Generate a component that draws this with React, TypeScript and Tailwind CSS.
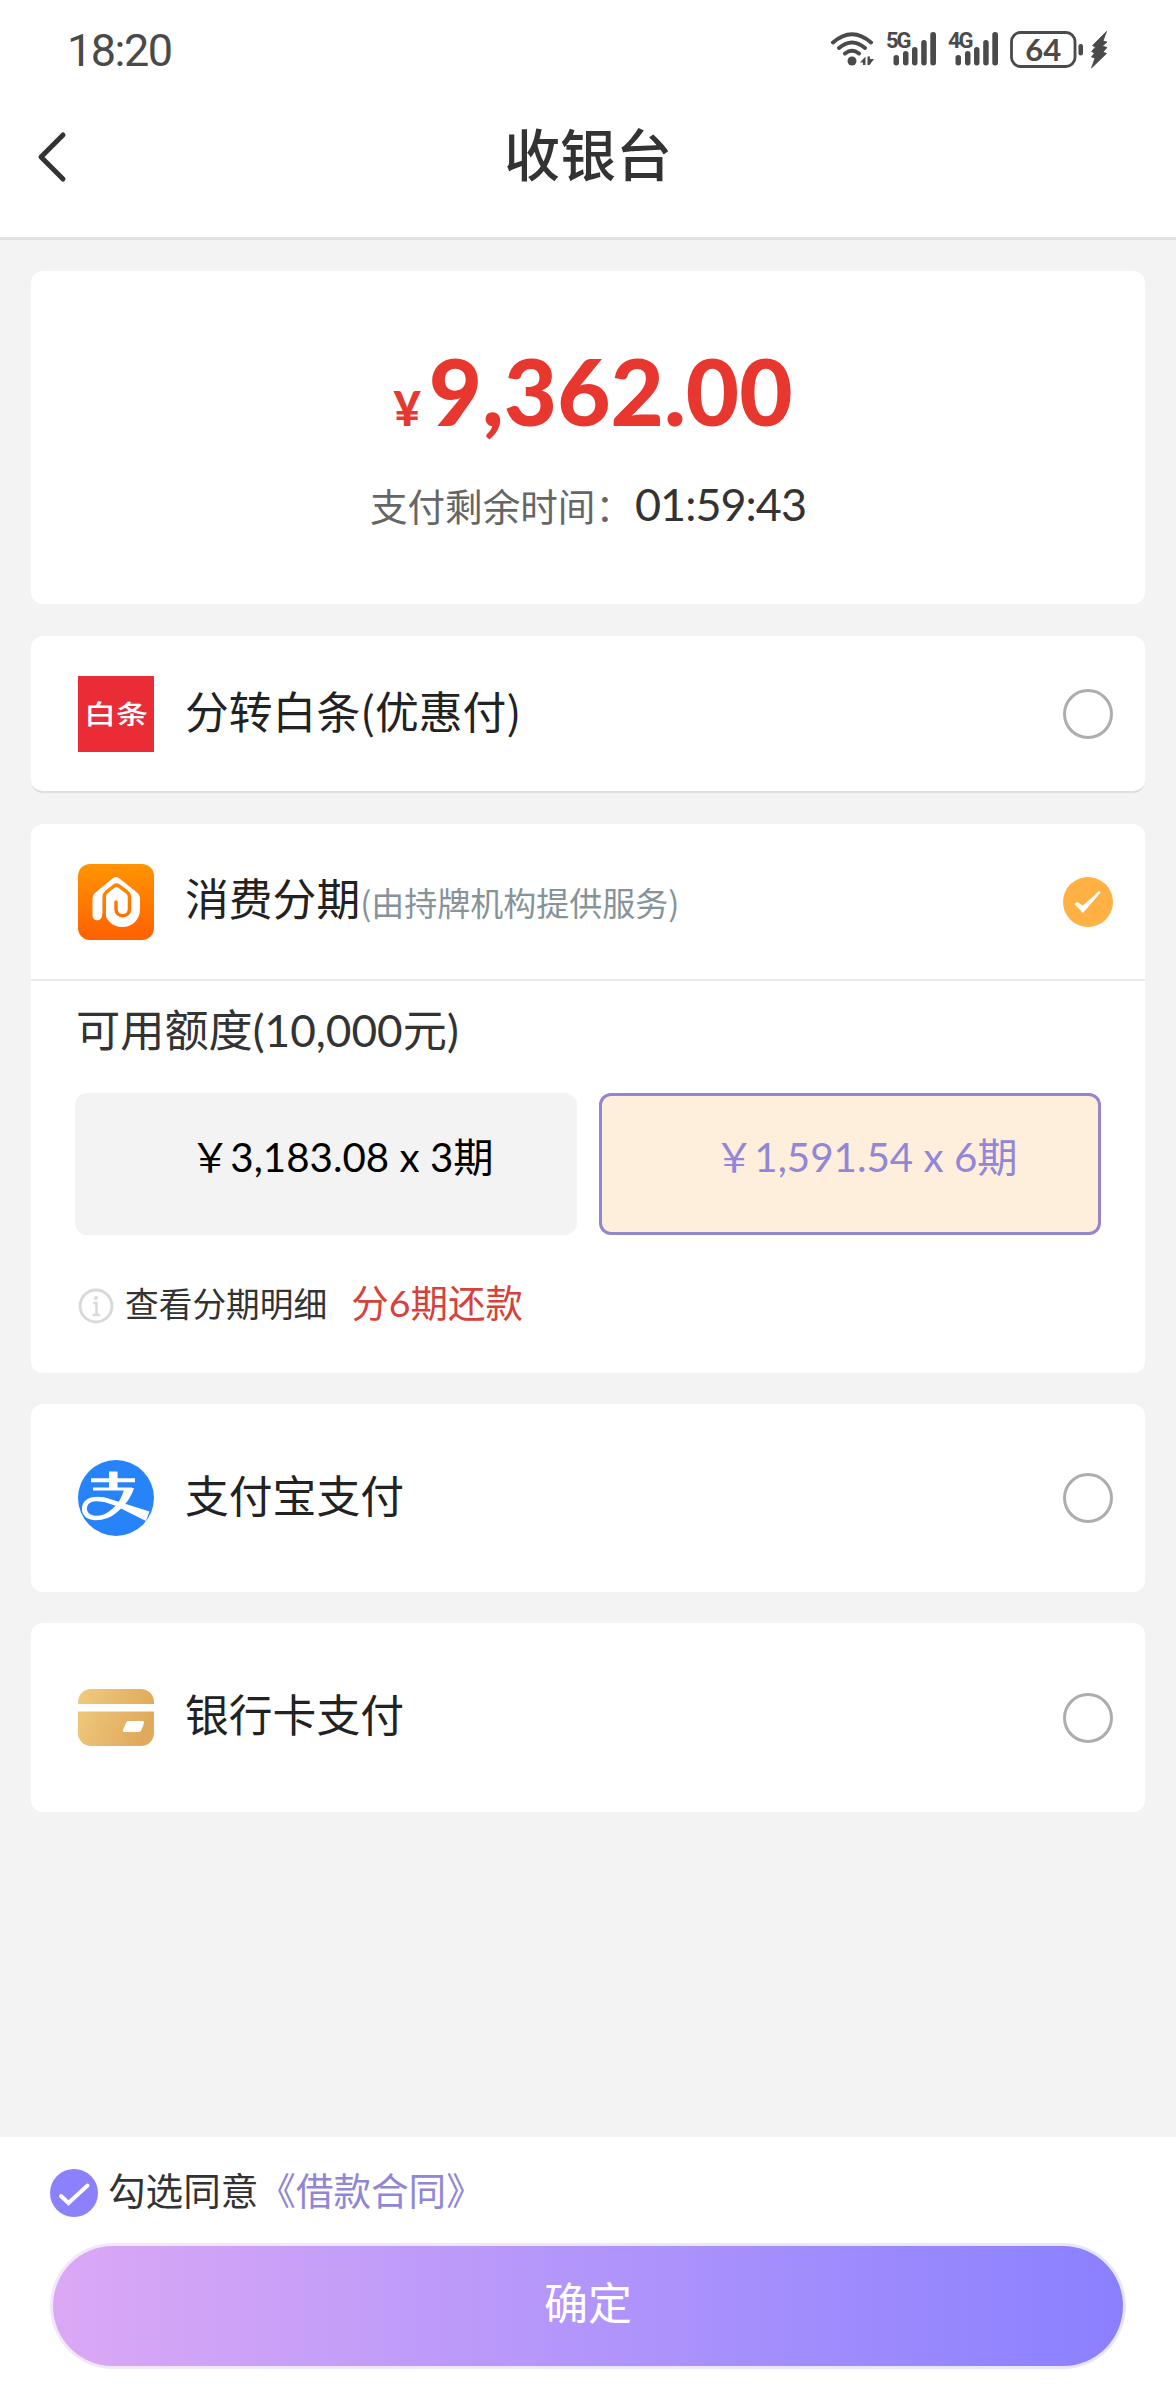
import React from 'react';

const Wifi = () => (
  <svg width="46" height="36" viewBox="0 0 46 36" fill="none" stroke="#4a4a4a" strokeWidth="4" strokeLinecap="round">
    <path d="M3 11.5 Q22 -5 41 11.5" />
    <path d="M9 17 Q22 6 35 17" />
    <path d="M15 22.5 Q22 17 29 22.5" />
    <circle cx="22" cy="30" r="4.5" fill="#4a4a4a" stroke="none" />
    <path d="M30 31.5 L35.5 25.5 V34 H33 V31.5 Z M37.5 25.5 V34 H39.5 L44 28 H40 V25.5 Z" stroke="none" fill="#4a4a4a" />
  </svg>
);

const Signal: React.FC<{ label: string }> = ({ label }) => (
  <div className="relative w-[52px] h-[36px]">
    <span className="absolute left-0 -top-[3px] font-['Roboto'] font-bold text-[22px] leading-[26px] tracking-[-2px] text-[#4a4a4a]">{label}</span>
    <svg width="52" height="36" viewBox="0 0 52 36" fill="#4a4a4a">
      <rect x="7.5" y="24" width="5.5" height="10.5" rx="2.7" />
      <rect x="17" y="20" width="5.5" height="14.5" rx="2.7" />
      <rect x="26" y="16" width="5.5" height="18.5" rx="2.7" />
      <rect x="35.2" y="9" width="5.5" height="25.5" rx="2.7" />
      <rect x="44.3" y="1" width="5.7" height="33.5" rx="2.7" />
    </svg>
  </div>
);

const Battery = () => (
  <svg width="100" height="38" viewBox="0 0 100 38" fill="none">
    <rect x="1.5" y="1.5" width="63.5" height="34" rx="9" stroke="#4a4a4a" strokeWidth="2.8" />
    <text x="33.3" y="29.5" fontSize="31" fontWeight="700" fontFamily="Lato" textAnchor="middle" fill="#4a4a4a">64</text>
    <rect x="68.5" y="13" width="4.5" height="11.5" rx="2.2" fill="#4a4a4a" />
    <path d="M96.500 0.500 L82.5 14.500 L85.500 16 L81.5 20.500 L84.500 22 L81.500 26 L85 27 L81.500 37 L96.500 22.500 L93 21 L97 16.500 L92.500 15 L97 11 L93 10 Z" fill="#4a4a4a" stroke="#4a4a4a" strokeWidth="0.8" strokeLinejoin="round" />
  </svg>
);

const BaitiaoIcon = () => (
  <div className="w-[76px] h-[76px] bg-[#ea2c36] flex items-center justify-center text-white text-[32px] font-medium leading-none">
    <span className="scale-y-[0.83]">白条</span>
  </div>
);

const HuabeiIcon = () => (
  <svg width="76" height="76" viewBox="0 0 76 76" fill="none">
    <defs>
      <linearGradient id="orange" x1="0" y1="0" x2="0" y2="76" gradientUnits="userSpaceOnUse">
        <stop offset="0" stopColor="#ff9500" />
        <stop offset="1" stopColor="#ff6000" />
      </linearGradient>
    </defs>
    <rect width="76" height="76" rx="12" fill="url(#orange)" />
    <path
      d="M14.5 35 Q14.5 31 17.5 28.5 L34.5 14.5 Q38 11.5 41.5 14.5 L59 28.5 Q62 31 62 35 V45 C62 56 54 63 44.5 63 C34 63 27 55.5 26.5 46 L24 51 C24 58 14.5 58 14.5 51 Z"
      fill="white"
    />
    <path
      d="M26.2 56 V33 Q26.2 30 28.5 28 L36 22 Q38.5 20.2 41 22 L49 28 Q51.5 30 51.5 33 V45 C51.5 54 38 54 38 45 V38"
      stroke="url(#orange)" strokeWidth="3.5" strokeLinecap="round" strokeLinejoin="round"
    />
  </svg>
);

const AlipayIcon = () => (
  <svg width="76" height="76" viewBox="0 0 76 76" fill="none">
    <circle cx="38" cy="38" r="38" fill="#2783fa" />
    <path d="M13 20.3 H57" stroke="white" strokeWidth="4" />
    <path d="M35.3 11.5 V29" stroke="white" strokeWidth="8.5" />
    <path d="M15 29 H54" stroke="white" strokeWidth="3" />
    <path d="M46.500 28 H56 C53 38 46 47 38 53 C28 62 5 64 4 50 C3 37 18 34 32 39 L71.5 51.5 L68 61 L42 48 C28 41 9 37 9 49 C9 57 23 58 31 51.500 C39 46 44 38 46.500 28 Z" fill="white" />
  </svg>
);

const BankIcon = () => (
  <svg width="76" height="57" viewBox="0 0 76 57">
    <defs>
      <linearGradient id="gold" x1="0" y1="0" x2="1" y2="0.3">
        <stop offset="0" stopColor="#f0cb80" />
        <stop offset="1" stopColor="#e0aa5c" />
      </linearGradient>
    </defs>
    <rect width="76" height="57" rx="13" fill="url(#gold)" />
    <rect y="15" width="76" height="7.5" fill="white" />
    <path d="M50.5 32 H64 Q66.5 32 66 34 L63.5 41 Q63 43 60.5 43 H47 Q44.5 43 45 41 L48 34 Q48.5 32 50.5 32 Z" fill="white" />
  </svg>
);

const Radio: React.FC<{ checked?: boolean }> = ({ checked }) =>
  checked ? (
    <svg width="50" height="50" viewBox="0 0 50 50">
      <circle cx="25" cy="25" r="25" fill="#ffb144" />
      <path d="M11.5 27 L14 25 L20 28.5 L36 14 L37.5 15.5 L20 36 Z" fill="white" />
    </svg>
  ) : (
    <div className="w-[50px] h-[50px] rounded-full border-[3px] border-[#adadad]" />
  );

interface RowProps {
  icon: React.ReactNode;
  title: string;
  note?: string;
  checked?: boolean;
  className: string;
}

const PayRow: React.FC<RowProps> = ({ icon, title, note, checked, className }) => (
  <div className={`flex items-center pl-[47px] pr-8 ${className}`}>
    {icon}
    <div className={`ml-[31px] flex-1 flex items-baseline font-['Noto_Sans_CJK_SC',sans-serif] text-[43.8px] leading-[60px] text-[#222] ${note ? '-mt-[4px]' : '-mt-[9px]'}`}>
      <span>{title}</span>
      {note && <span className="text-[33px] text-[#869499]">{note}</span>}
    </div>
    <Radio checked={checked} />
  </div>
);

export default function App() {
  return (
    <div className="w-[1176px] h-[2400px] bg-[#f3f3f3] flex flex-col font-['Lato','Noto_Sans_CJK_SC',sans-serif] whitespace-nowrap overflow-hidden">
      {/* Header */}
      <header className="h-60 shrink-0 bg-white border-b-[3px] border-[#e1e1e1]">
        <div className="h-[101px] flex justify-between items-center pl-[67px] pr-[66px]">
          <span className="font-['Roboto'] text-[45px] tracking-[-1.5px] text-[#4a4a4a]">18:20</span>
          <div className="flex items-start -mt-px">
            <Wifi />
            <div className="ml-[10px]"><Signal label="5G" /></div>
            <div className="ml-[10px]"><Signal label="4G" /></div>
            <div className="ml-[10px]"><Battery /></div>
          </div>
        </div>
        <div className="h-[112px] grid grid-cols-[1fr_auto_1fr] items-center">
          <svg className="ml-9" width="32" height="54" viewBox="0 0 32 54" fill="none">
            <path d="M27 5 L5 27 L27 49" stroke="#333" strokeWidth="5" strokeLinecap="round" strokeLinejoin="round" />
          </svg>
          <h1 className="text-[56px] leading-[80px] font-medium text-[#333] -mt-[5px]">收银台</h1>
        </div>
      </header>

      <main className="flex-1 px-[31px] pt-[31px]">
        {/* Amount */}
        <section className="h-[333px] bg-white rounded-xl flex flex-col items-center pt-[65px]">
          <div className="flex items-baseline text-[#e8372f] leading-[110px] pl-[10px]">
            <span className="text-[47px] font-black">¥</span>
            <span className="text-[92px] font-black ml-2">9,362.00</span>
          </div>
          <div className="flex items-baseline leading-[60px] mt-[11px]">
            <span className="text-[37.6px] text-[#666]">支付剩余时间：</span>
            <span className="ml-[2px] text-[45px] tracking-[-1px] text-[#333]">01:59:43</span>
          </div>
        </section>

        <section className="mt-8 h-[157px] bg-white rounded-xl border-b-2 border-[#dedede]">
          <PayRow icon={<BaitiaoIcon />} title="分转白条(优惠付)" className="h-[156px]" />
        </section>

        {/* Installments */}
        <section className="mt-[31px] h-[549px] bg-white rounded-xl">
          <PayRow
            icon={<HuabeiIcon />}
            title="消费分期"
            note="(由持牌机构提供服务)"
            checked
            className="h-[157px] border-b-2 border-[#e9e9e9]"
          />
          <div className="px-11 pt-[17px]">
            <p className="pl-px text-[44.2px] leading-[64px] text-[#333]">可用额度(10,000元)</p>
            <div className="mt-[31px] grid grid-cols-2 gap-[22px] text-[40.3px] leading-[60px]">
              <div className="h-[142px] rounded-xl bg-[#f3f3f3] text-black pt-[34px] pl-[115px]">￥3,183.08 x 3期</div>
              <div className="h-[142px] rounded-xl bg-[#fdefdb] text-[#9286d8] border-[3px] border-[#9286cc] pt-[31px] pl-[112px]">￥1,591.54 x 6期</div>
            </div>
            <div className="mt-[39px] flex items-center leading-[60px] pl-[3px]">
              <svg className="mt-[3px]" width="36" height="36" viewBox="0 0 36 36" fill="none" stroke="#dadada">
                <circle cx="18" cy="18" r="16" strokeWidth="3" />
                <path d="M15 15 H18.5 V27 M14.5 27 H22" strokeWidth="2.5" />
                <circle cx="18" cy="10" r="2" fill="#dadada" stroke="none" />
              </svg>
              <span className="ml-[11px] text-[33.7px] text-[#333]">查看分期明细</span>
              <span className="ml-6 text-[37.5px] text-[#d6413b] -mt-[2px]">分6期还款</span>
            </div>
          </div>
        </section>

        <section className="mt-[31px] bg-white rounded-xl">
          <PayRow icon={<AlipayIcon />} title="支付宝支付" className="h-[188px]" />
        </section>
        <section className="mt-[31px] bg-white rounded-xl">
          <PayRow icon={<BankIcon />} title="银行卡支付" className="h-[189px]" />
        </section>
      </main>

      {/* Footer */}
      <footer className="h-[263px] shrink-0 bg-white px-[50px] pt-[26px]">
        <div className="flex items-center h-[60px] text-[37.6px] text-[#333]">
          <svg width="48" height="48" viewBox="0 0 48 48">
            <circle cx="24" cy="24" r="24" fill="#8b82fb" />
            <path d="M11 27 L18.5 34 L37.5 16.5" fill="none" stroke="white" strokeWidth="4" strokeLinecap="round" />
          </svg>
          <div className="ml-[10px] -mt-[4px]">
            <span>勾选同意</span>
            <span className="text-[#9086d6]">《借款合同》</span>
          </div>
        </div>
        <button className="mt-5 w-full h-[126px] rounded-full p-[3px] bg-linear-to-r from-[#f3e6fb] to-[#e8e6fc]">
          <span className="flex items-center justify-center h-full rounded-full bg-linear-to-r from-[#dba8f5] to-[#8a80ff] text-white text-[44px] pb-[6px]">确定</span>
        </button>
      </footer>
    </div>
  );
}
